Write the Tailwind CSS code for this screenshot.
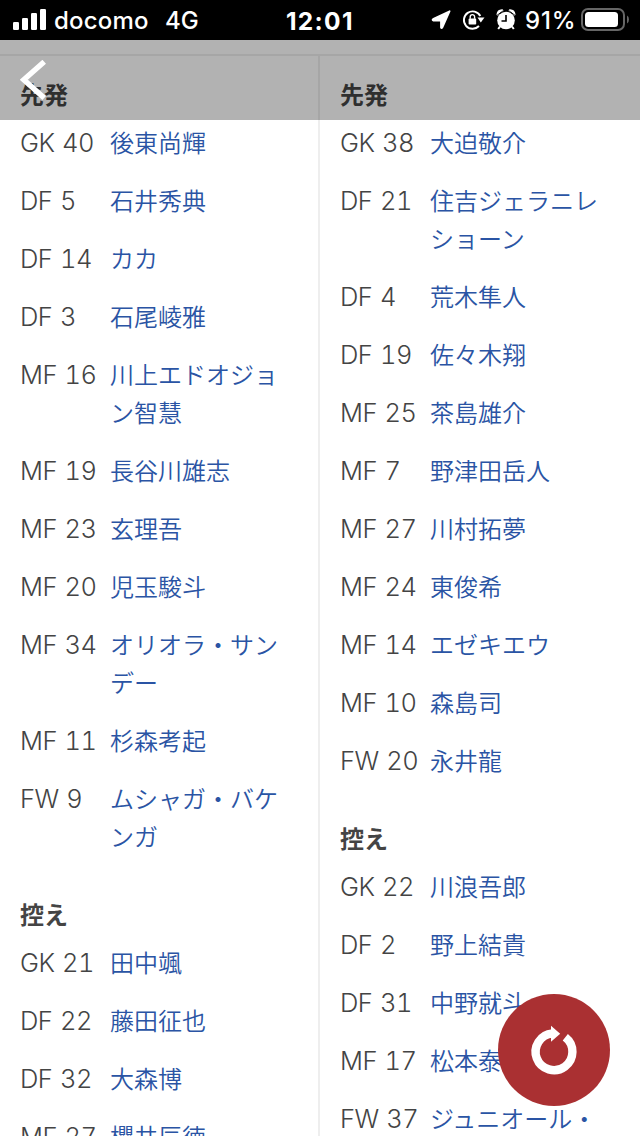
<!DOCTYPE html>
<html lang="ja">
<head>
<meta charset="utf-8">
<title>スターティングメンバー</title>
<script src="https://cdn.jsdelivr.net/npm/@tailwindcss/browser@4"></script>
</head>
<body class="bg-white">
<div class="relative flex h-[1136px] w-[640px] flex-col overflow-hidden bg-white font-['Inter','Noto_Sans_CJK_JP',sans-serif] text-[24px] text-[#444]">
  <header class="flex h-10 shrink-0 items-center bg-black text-white">
    <svg class="ml-[13px] block" width="33" height="22" viewBox="0 0 33 22" fill="#fff"><rect y="13" width="6" height="8" rx="1.3"/><rect x="9" y="9" width="6" height="12" rx="1.3"/><rect x="18" y="4" width="6" height="17" rx="1.3"/><rect x="27" y="0" width="6" height="21" rx="1.3"/></svg>
    <span class="ml-2 w-[111px] pt-[2px] whitespace-nowrap text-[24px] font-medium tracking-[0.2px]">docomo</span>
    <span class="w-[121px] pt-[2px] whitespace-nowrap text-[24px] font-medium">4G</span>
    <span class="w-[144px] pt-[2px] whitespace-nowrap text-[24.5px] font-bold tracking-[1.3px]">12:01</span>
    <svg class="block shrink-0" width="22" height="22" viewBox="0 0 22 22"><path d="M19.6 2.2 L12.4 18.4 Q11.5 20 11 18.4 V11.6 H3.5 Q1.6 11 3.5 9.8Z" fill="#fff" stroke="#fff" stroke-width="1.8" stroke-linejoin="round"/></svg>
    <svg class="ml-[10px] block shrink-0" width="24" height="22" viewBox="0 0 24 22"><path d="M18.3 7 A8.7 8.7 0 1 0 17 17" fill="none" stroke="#fff" stroke-width="1.9"/><path d="M15.5 8.6H22.5L18.8 13.4Z" fill="#fff"/><rect x="6.6" y="9.6" width="7.6" height="6" rx=".8" fill="#fff"/><path d="M8.2 9.8V7.8a2.2 2.2 0 0 1 4.4 0v2" fill="none" stroke="#fff" stroke-width="1.4"/></svg>
    <svg class="ml-[9px] block shrink-0" width="22" height="22" viewBox="0 0 22 22"><circle cx="11" cy="11.5" r="8.8" fill="#fff"/><path d="M5 17.5 3.2 20M17 17.5 18.8 20" stroke="#fff" stroke-width="2"/><path d="M2.8 5.4Q3.2 1.8 7 1.6M19.2 5.4Q18.8 1.8 15 1.6" stroke="#fff" stroke-width="2.6" stroke-linecap="round" fill="none"/><path d="M1.7 6.6 8 1.9M20.3 6.6 14 1.9" stroke="#000" stroke-width=".9"/><path d="M11 6v6H6.5" fill="none" stroke="#000" stroke-width="1.6"/></svg>
    <span class="ml-[8px] w-[56px] pt-[2px] whitespace-nowrap text-[24px] font-medium tracking-[0.8px]">91%</span>
    <svg class="block shrink-0" width="48" height="24" viewBox="0 0 48 24"><rect x="1" y="1" width="42" height="21" rx="6" fill="none" stroke="#666" stroke-width="2"/><rect x="4" y="4" width="33" height="15" rx="3.5" fill="#fff"/><path d="M46 7.5q2 .8 2 4t-2 4z" fill="#666"/></svg>
  </header>
  <main class="mt-[14px] grid shrink-0 grid-cols-2 border-t-2 border-[#eee] leading-[38px]">
    <section class="border-r-2 border-[#eee] pt-[21px] pl-5">
      <h2 class="mb-[10px] font-bold">先発</h2>
      <dl id="home-start"></dl>
      <h2 class="mt-5 mb-[10px] pt-5 font-bold">控え</h2>
      <dl id="home-bench"></dl>
    </section>
    <section class="pt-[21px] pl-5">
      <h2 class="mb-[10px] font-bold">先発</h2>
      <dl id="away-start"></dl>
      <h2 class="mt-5 mb-[10px] pt-5 font-bold">控え</h2>
      <dl id="away-bench"></dl>
    </section>
  </main>
  <div class="absolute top-10 left-0 h-20 w-full bg-black/30">
    <svg class="absolute top-5 left-5" width="27" height="40" viewBox="0 0 27 40"><path d="M24.2 1.8 3.8 19.8 24.2 38" fill="none" stroke="#fff" stroke-width="5.4"/></svg>
  </div>
  <button class="absolute top-[994px] left-[498px] flex size-28 items-center justify-center rounded-full bg-[#aa3032]" aria-label="更新">
    <svg width="112" height="112" viewBox="0 0 112 112"><path d="M54.5 39.4 A18.4 18.4 0 1 0 67.3 43.2" fill="none" stroke="#fff" stroke-width="8.4"/><path d="M53 31.8 62.2 39.8 53 47.8Z" fill="#fff"/></svg>
  </button>
</div>
<template id="row">
  <div class="mb-5 flex last:mb-0">
    <dt class="-mt-px w-[90px] shrink-0 text-[25.5px] font-light tracking-[-0.5px] whitespace-nowrap tabular-nums [word-spacing:1.3px]"></dt>
    <dd class="whitespace-pre font-[350] text-[#2a54a4]"></dd>
  </div>
</template>
<script>
const squads = {
  'home-start': [['GK 40','後東尚輝'],['DF 5','石井秀典'],['DF 14','カカ'],['DF 3','石尾崚雅'],['MF 16','川上エドオジョ\nン智慧'],['MF 19','長谷川雄志'],['MF 23','玄理吾'],['MF 20','児玉駿斗'],['MF 34','オリオラ・サン\nデー'],['MF 11','杉森考起'],['FW 9','ムシャガ・バケ\nンガ']],
  'home-bench': [['GK 21','田中颯'],['DF 22','藤田征也'],['DF 32','大森博'],['MF 27','櫻井辰徳']],
  'away-start': [['GK 38','大迫敬介'],['DF 21','住吉ジェラニレ\nショーン'],['DF 4','荒木隼人'],['DF 19','佐々木翔'],['MF 25','茶島雄介'],['MF 7','野津田岳人'],['MF 27','川村拓夢'],['MF 24','東俊希'],['MF 14','エゼキエウ'],['MF 10','森島司'],['FW 20','永井龍']],
  'away-bench': [['GK 22','川浪吾郎'],['DF 2','野上結貴'],['DF 31','中野就斗'],['MF 17','松本泰志'],['FW 37','ジュニオール・']]
};
const row = document.getElementById('row');
for (const [id, players] of Object.entries(squads)) {
  for (const [pos, name] of players) {
    const el = row.content.cloneNode(true);
    el.querySelector('dt').textContent = pos;
    el.querySelector('dd').textContent = name;
    document.getElementById(id).append(el);
  }
}
</script>
</body>
</html>
